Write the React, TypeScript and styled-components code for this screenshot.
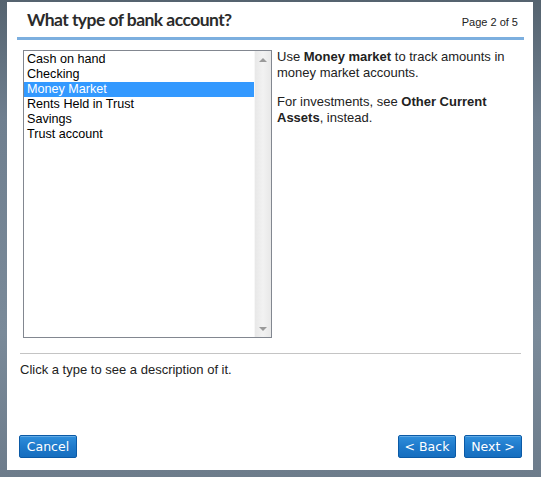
import React, { useState } from "react";
import styled, { createGlobalStyle } from "styled-components";

const GlobalStyle = createGlobalStyle`
  html, body {
    margin: 0;
    padding: 0;
    width: 541px;
    height: 477px;
    overflow: hidden;
  }
  body {
    background: linear-gradient(180deg, #55636f 0%, #6f7f8f 25%, #7a8a99 70%, #6d7c8b 100%);
    font-family: "Liberation Sans", Arial, sans-serif;
  }
`;

const Frame = styled.div`
  width: 541px;
  height: 477px;
  padding: 2px 8px 7px 7px;
  box-sizing: border-box;
`;

const Dialog = styled.div`
  height: 100%;
  background: #ffffff;
  display: flex;
  flex-direction: column;
`;

const Header = styled.div`
  display: flex;
  justify-content: space-between;
  align-items: flex-end;
  margin: 0 9px 0 10px;
  padding: 0 6px 7px 10px;
  height: 38px;
  box-sizing: border-box;
  border-bottom: 3px solid #7cafdf;
`;

const Title = styled.h1`
  margin: 0;
  font-family: "Lato", "Open Sans", sans-serif;
  font-weight: 700;
  font-size: 17.5px;
  letter-spacing: -0.55px;
  line-height: 20px;
  color: #2b2b2b;
`;

const PageNum = styled.span`
  font-size: 11px;
  line-height: 13px;
  color: #222;
  padding-bottom: 1px;
`;

const Content = styled.div`
  display: flex;
  padding: 10px 0 0 16px;
`;

const ListBox = styled.div`
  width: 249px;
  height: 288px;
  box-sizing: border-box;
  border: 1px solid #828790;
  display: flex;
`;

const Items = styled.ul`
  flex: 1;
  list-style: none;
  margin: 0;
  padding: 1px 0 0 0;
`;

const Item = styled.li<{ $selected: boolean }>`
  height: 15px;
  line-height: 15px;
  font-size: 12.6px;
  padding-left: 3px;
  color: ${({ $selected }) => ($selected ? "#ffffff" : "#000000")};
  background: ${({ $selected }) => ($selected ? "#3399ff" : "transparent")};
  cursor: default;
  white-space: nowrap;
`;

const ScrollBar = styled.div`
  width: 16px;
  background: linear-gradient(90deg, #e8e8e8 0%, #f2f2f2 50%, #e8e8e8 100%);
  border-left: 1px solid #f7f7f7;
  display: flex;
  flex-direction: column;
  justify-content: space-between;
  align-items: center;
  padding: 7px 0 6px;
`;

const Arrow = styled.div<{ $down?: boolean }>`
  width: 0;
  height: 0;
  border-left: 4px solid transparent;
  border-right: 4px solid transparent;
  ${({ $down }) =>
    $down ? "border-top: 4px solid #9a9a9a;" : "border-bottom: 4px solid #9a9a9a;"}
`;

const Description = styled.div`
  margin: -1px 0 0 5px;
  width: 242px;
  font-size: 13px;
  line-height: 16px;
  color: #222;

  p {
    margin: 0 0 13px 0;
  }
  b {
    color: #222;
  }
`;

const Separator = styled.hr`
  border: none;
  border-top: 1px solid #c4c4c4;
  margin: 15px 12px 0 13px;
  height: 0;
`;

const Hint = styled.div`
  padding: 8px 0 0 13px;
  font-size: 13px;
  line-height: 16px;
  color: #222;
`;

const Footer = styled.div`
  margin-top: auto;
  display: flex;
  padding: 0 11px 12px 12px;
  gap: 8px;
`;

const Spacer = styled.div`
  flex: 1;
`;

const Button = styled.button`
  width: 58px;
  height: 23px;
  box-sizing: border-box;
  border: 1px solid #0b5aa6;
  border-radius: 2px;
  background: linear-gradient(180deg, #2f8fdc 0%, #1f7acb 50%, #166ebf 100%);
  box-shadow: inset 0 1px 0 rgba(255, 255, 255, 0.25);
  color: #ffffff;
  font-family: "DejaVu Sans", Verdana, sans-serif;
  font-size: 12.5px;
  padding: 0;
  cursor: pointer;
`;

const types = [
  "Cash on hand",
  "Checking",
  "Money Market",
  "Rents Held in Trust",
  "Savings",
  "Trust account",
];

export default function App() {
  const [selected, setSelected] = useState("Money Market");

  return (
    <>
      <GlobalStyle />
      <Frame>
        <Dialog>
          <Header>
            <Title>What type of bank account?</Title>
            <PageNum>Page 2 of 5</PageNum>
          </Header>
          <Content>
            <ListBox>
              <Items>
                {types.map(t => (
                  <Item key={t} $selected={t === selected} onClick={() => setSelected(t)}>
                    {t}
                  </Item>
                ))}
              </Items>
              <ScrollBar>
                <Arrow />
                <Arrow $down />
              </ScrollBar>
            </ListBox>
            <Description>
              <p>
                Use <b>Money market</b> to track amounts in money market accounts.
              </p>
              <p>
                For investments, see <b>Other Current Assets</b>, instead.
              </p>
            </Description>
          </Content>
          <Separator />
          <Hint>Click a type to see a description of it.</Hint>
          <Footer>
            <Button>Cancel</Button>
            <Spacer />
            <Button>&lt; Back</Button>
            <Button>Next &gt;</Button>
          </Footer>
        </Dialog>
      </Frame>
    </>
  );
}
